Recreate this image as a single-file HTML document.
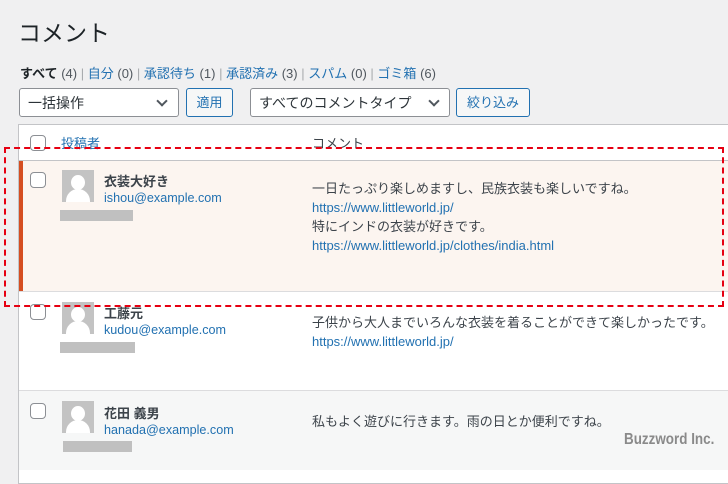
<!DOCTYPE html>
<html><head><meta charset="utf-8"><style>
*{margin:0;padding:0;box-sizing:border-box}
body{width:728px;height:460px;overflow:hidden;background:#f0f0f1;font-family:"Liberation Sans","Noto Sans CJK JP",sans-serif;color:#3c434a;font-size:13px;position:relative}
.a{position:absolute;white-space:nowrap}
.l{color:#2271b1}
.cnt{color:#50575e}
.sel{position:absolute;height:29px;background:#fff;border:1px solid #8c8f94;border-radius:3px;font-size:14px;color:#2c3338;padding:4px 8px}
.btn{position:absolute;height:29px;background:#f6f7f7;border:1px solid #2271b1;border-radius:3px;color:#2271b1;font-size:13px;text-align:center;line-height:27px}
.cb{position:absolute;width:16px;height:16px;border:1px solid #8c8f94;border-radius:4px;background:#fff}
.av{position:absolute;width:32px;height:32px;background:#c3c3c3;overflow:hidden}
.av:before{content:"";position:absolute;left:9px;top:5px;width:14px;height:15px;border-radius:50%;background:#fff}
.av:after{content:"";position:absolute;left:4px;top:19px;width:24px;height:20px;border-radius:12px 12px 0 0;background:#fff}
.bar{position:absolute;height:11px;background:#c0c0c0}
.nm{font-weight:bold;color:#3c434a}
.em{font-size:12.6px}
.chev{position:absolute;width:8px;height:8px;border-right:2px solid #50575e;border-bottom:2px solid #50575e;transform:rotate(45deg)}
</style></head><body>
<div class="a" style="left:18px;top:14px;font-size:23px;color:#1d2327">コメント</div>
<div class="a" style="left:20px;top:63px;font-size:13px"><b style="color:#1d2327">すべて</b> <span class="cnt">(4)</span> <span style="color:#a7aaad">|</span> <span class="l">自分</span> <span class="cnt">(0)</span> <span style="color:#a7aaad">|</span> <span class="l">承認待ち</span> <span class="cnt">(1)</span> <span style="color:#a7aaad">|</span> <span class="l">承認済み</span> <span class="cnt">(3)</span> <span style="color:#a7aaad">|</span> <span class="l">スパム</span> <span class="cnt">(0)</span> <span style="color:#a7aaad">|</span> <span class="l">ゴミ箱</span> <span class="cnt">(6)</span></div>
<div class="sel" style="left:19px;top:88px;width:160px">一括操作</div><div class="chev" style="left:158px;top:97px"></div>
<div class="btn" style="left:186px;top:88px;width:47px">適用</div>
<div class="sel" style="left:250px;top:88px;width:200px">すべてのコメントタイプ</div><div class="chev" style="left:430px;top:97px"></div>
<div class="btn" style="left:456px;top:88px;width:74px">絞り込み</div>

<div style="position:absolute;left:18px;top:124px;width:720px;height:360px;background:#fff;border:1px solid #c3c4c7"></div>
<div class="cb" style="left:30px;top:135px"></div>
<div class="a l" style="left:61px;top:133px;font-size:13px">投稿者</div>
<div class="a" style="left:312px;top:133px;font-size:13px">コメント</div>
<div style="position:absolute;left:19px;top:160px;width:720px;height:1px;background:#c3c4c7"></div>

<div style="position:absolute;left:19px;top:161px;width:720px;height:130px;background:#fcf5f0;border-left:4px solid #d54e21"></div>
<div style="position:absolute;left:19px;top:291px;width:720px;height:1px;background:#dcdcde"></div>
<div style="position:absolute;left:19px;top:390px;width:720px;height:80px;background:#f6f7f7;border-top:1px solid #dcdcde"></div>

<div class="cb" style="left:30px;top:172px"></div>
<div class="av" style="left:62px;top:170px"></div>
<div class="a nm" style="left:104px;top:171px">衣装大好き</div>
<div class="a l em" style="left:104px;top:191px">ishou@example.com</div>
<div class="bar" style="left:60px;top:210px;width:73px"></div>
<div class="a" style="left:312px;top:179px;line-height:19px">一日たっぷり楽しめますし、民族衣装も楽しいですね。<br><span class="l">https://www.littleworld.jp/</span><br>特にインドの衣装が好きです。<br><span class="l">https://www.littleworld.jp/clothes/india.html</span></div>

<div class="cb" style="left:30px;top:304px"></div>
<div class="av" style="left:62px;top:302px"></div>
<div class="a nm" style="left:104px;top:303px">工藤元</div>
<div class="a l em" style="left:104px;top:323px">kudou@example.com</div>
<div class="bar" style="left:60px;top:342px;width:75px"></div>
<div class="a" style="left:312px;top:313px;line-height:19px">子供から大人までいろんな衣装を着ることができて楽しかったです。<br><span class="l">https://www.littleworld.jp/</span></div>

<div class="cb" style="left:30px;top:403px"></div>
<div class="av" style="left:62px;top:401px"></div>
<div class="a nm" style="left:104px;top:403px">花田 義男</div>
<div class="a l em" style="left:104px;top:423px">hanada@example.com</div>
<div class="bar" style="left:63px;top:441px;width:69px"></div>
<div class="a" style="left:312px;top:411px">私もよく遊びに行きます。雨の日とか便利ですね。</div>

<div class="a" style="left:624px;top:431px;font-size:16px;color:#8a8a8a;font-weight:bold;transform:scaleX(0.84);transform-origin:left">Buzzword Inc.</div>

<div style="position:absolute;left:4px;top:147px;width:720px;height:160px;border:2px dashed #e60012"></div>
</body></html>
